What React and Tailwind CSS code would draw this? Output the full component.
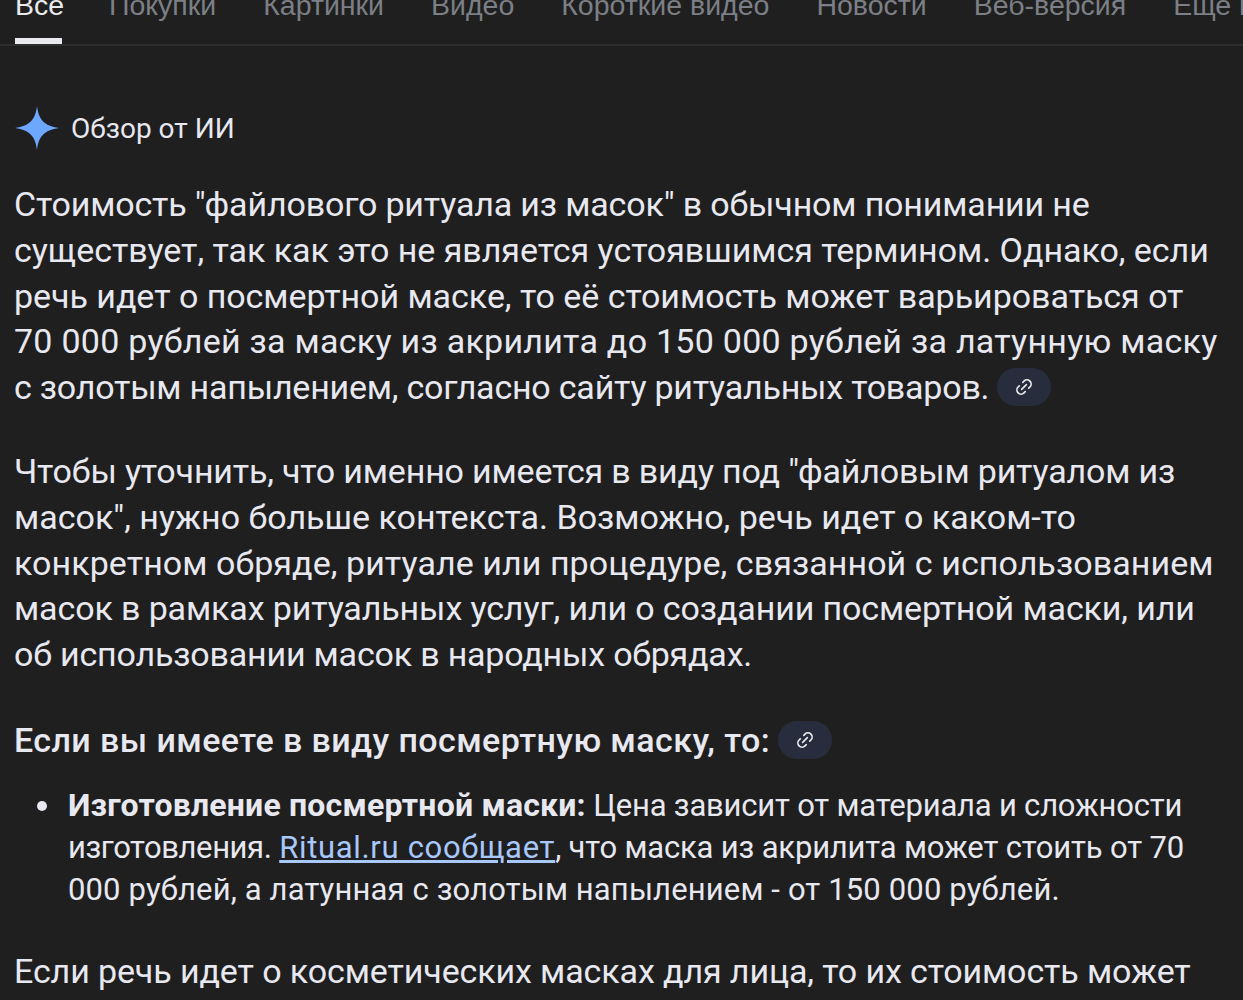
import React from 'react';
import { Link2 } from 'lucide-react';

const tabs = ['Покупки', 'Картинки', 'Видео', 'Короткие видео', 'Новости', 'Веб-версия', 'Еще в'];

const LinkChip = () => (
  <span className="inline-flex items-center justify-center w-[54px] h-[38px] ml-2 rounded-full bg-[#282d3d] align-middle tracking-normal text-[#e8eaed] -translate-y-[3px]">
    <Link2 size={20} className="-rotate-45" />
  </span>
);

const Line = ({ className, children }) => <span className={`block whitespace-nowrap ${className || ''}`}>{children}</span>;

const App = () => {
  return (
    <div className="h-[1000px] overflow-hidden bg-[#1f1f1f] font-['Roboto',sans-serif] text-[#e8e8f0]">
      <div className="h-[46px] overflow-hidden border-b-2 border-[#2d2e30]">
        <div className="flex gap-[47px] pl-[15px] -mt-[12px] font-['Liberation_Sans',sans-serif] text-[28.5px] leading-[34px] text-[#7c7f85] whitespace-nowrap">
          <div className="relative h-[56px] w-[47px] text-[#e8eaed]">
            Все
            <div className="absolute bottom-0 left-0 right-0 h-[6px] bg-[#e8eaed]"></div>
          </div>
          {tabs.map((t) => (
            <div key={t}>{t}</div>
          ))}
        </div>
      </div>

      <div className="flex items-center gap-[12px] pl-[15px] mt-[60px] h-[46px]">
        <svg width="44" height="44" viewBox="0 0 44 44" className="shrink-0 -mt-[2px]">
          <path d="M22 0 C23.5 13 29 20 44 22 C29 24 23.5 31 22 44 C20.5 31 15 24 0 22 C15 20 20.5 13 22 0 Z" fill="#6ea8fe" />
        </svg>
        <span className="text-[28px]">Обзор от ИИ</span>
      </div>

      <div className="pl-[14px] mt-[30px] text-[34px] leading-[45.8px]">
        <Line className="tracking-[-0.16px]">Стоимость "файлового ритуала из масок" в обычном понимании не</Line>
        <Line className="tracking-[-0.03px]">существует, так как это не является устоявшимся термином. Однако, если</Line>
        <Line className="tracking-[-0.04px]">речь идет о посмертной маске, то её стоимость может варьироваться от</Line>
        <Line className="tracking-[0.26px]">70 000 рублей за маску из акрилита до 150 000 рублей за латунную маску</Line>
        <Line className="tracking-[-0.21px]">с золотым напылением, согласно сайту ритуальных товаров.<LinkChip /></Line>
      </div>

      <div className="pl-[14px] mt-[38px] text-[34px] leading-[45.8px]">
        <Line className="tracking-[-0.17px]">Чтобы уточнить, что именно имеется в виду под "файловым ритуалом из</Line>
        <Line>масок", нужно больше контекста. Возможно, речь идет о каком-то</Line>
        <Line className="tracking-[0.07px]">конкретном обряде, ритуале или процедуре, связанной с использованием</Line>
        <Line className="tracking-[-0.12px]">масок в рамках ритуальных услуг, или о создании посмертной маски, или</Line>
        <Line className="tracking-[-0.19px]">об использовании масок в народных обрядах.</Line>
      </div>

      <div className="pl-[14px] mt-[40px] text-[34px] leading-[45.8px] font-medium">
        <Line className="tracking-[0.42px]">Если вы имеете в виду посмертную маску, то:<LinkChip /></Line>
      </div>

      <div className="relative pl-[68px] mt-[20px] text-[31px] leading-[42px]">
        <span className="absolute left-[37px] top-[17px] w-[10px] h-[10px] rounded-full bg-[#e8e8f0]"></span>
        <Line className="tracking-[-0.2px]">
          <b className="font-bold text-[32px] tracking-[0.2px]">Изготовление посмертной маски:</b> Цена зависит от материала и сложности
        </Line>
        <Line>
          <span className="tracking-[-0.4px]">изготовления.</span>{' '}
          <a className="text-[#a8c7fa] underline tracking-[0.67px]">Ritual.ru сообщает</a>
          <span className="tracking-[-0.17px]">, что маска из акрилита может стоить от 70</span>
        </Line>
        <Line className="tracking-[0.14px]">000 рублей, а латунная с золотым напылением - от 150 000 рублей.</Line>
      </div>

      <div className="pl-[14px] mt-[38px] text-[34px] leading-[45.8px]">
        <Line className="tracking-[-0.11px]">Если речь идет о косметических масках для лица, то их стоимость может</Line>
      </div>
    </div>
  );
};

export default App;
